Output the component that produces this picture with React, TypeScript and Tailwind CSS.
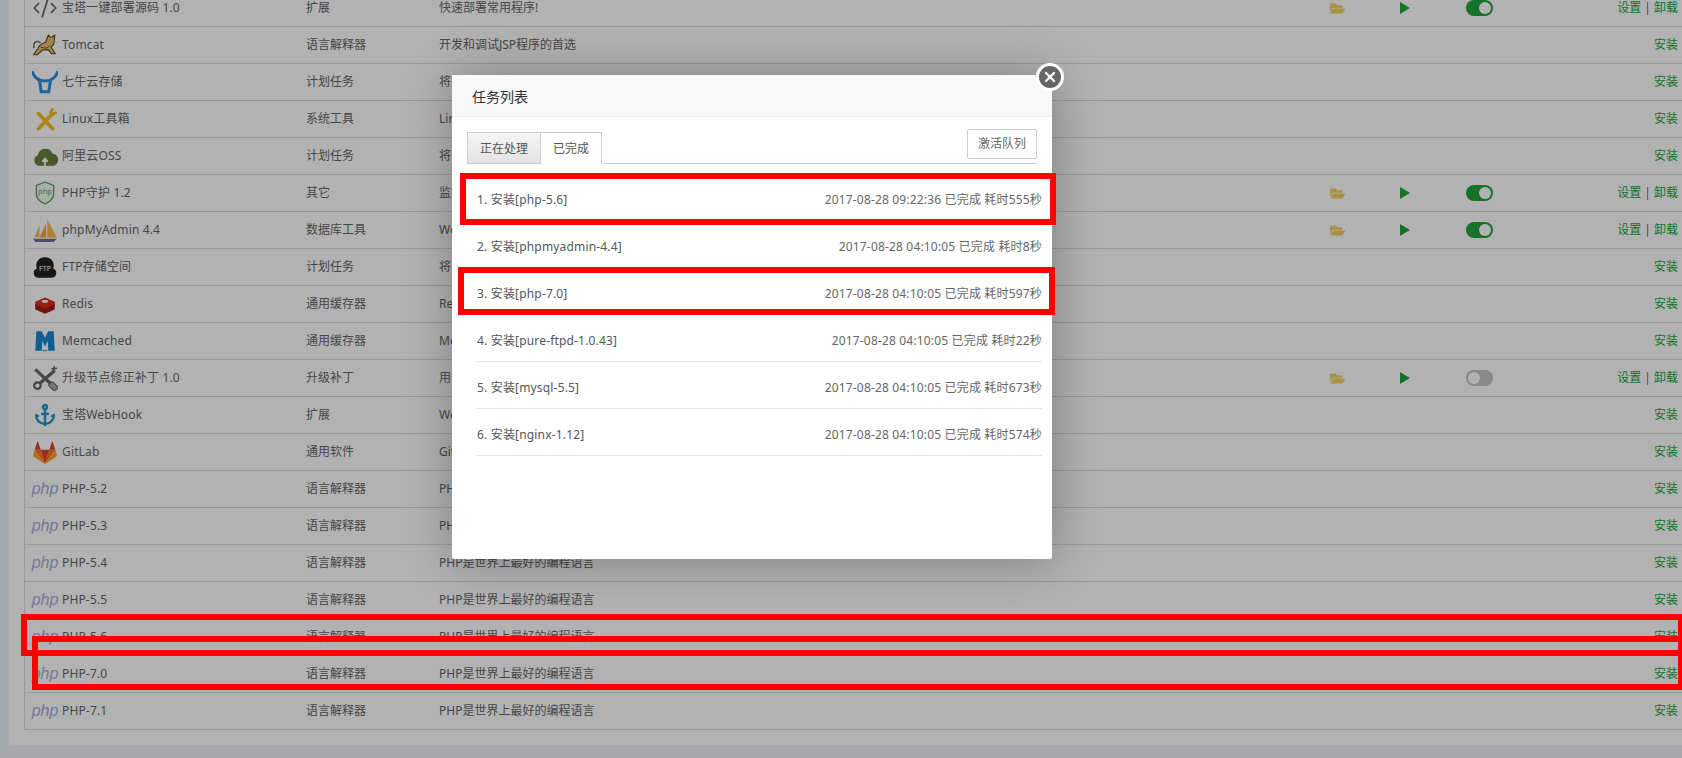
import React from "react";
import { Anchor, CodeXml, X } from "lucide-react";
import { FaFolderOpen } from "react-icons/fa";

type Plugin = {
  name: string;
  type: string;
  desc: string;
  icon: React.ReactNode;
  // Only installed plugins carry a switch
  enabled?: boolean;
};

const svgProps = { width: 26, height: 26, viewBox: "0 0 24 24" };

const TomcatIcon = () => (
  <svg {...svgProps}>
    <path d="M8 10C3 7 1 10 2 15" fill="none" stroke="#6b6b6b" strokeWidth="1.4" />
    <path
      d="M15 3l2.5 2L21 3l-.5 6c0 3-2 4-3 5l4 6h-3.5l-3-3.500H10L5 21H1.500l4-6c1-3 4-4.500 7-5.500z"
      fill="#e0c070"
      stroke="#5c4a1c"
      strokeWidth="1"
    />
    <path d="M8 14l5 1 3-2" fill="none" stroke="#5c4a1c" strokeWidth="0.8" />
  </svg>
);

const QiniuIcon = () => (
  <svg {...svgProps}>
    <path d="M0 2c2 6 6 9 12 9s10-3 12-9" fill="none" stroke="#2f8fe0" strokeWidth="2.800" />
    <path d="M7 11l1.500 10h7L17 11" fill="none" stroke="#2f8fe0" strokeWidth="2.800" />
  </svg>
);

const LinuxToolsIcon = () => (
  <svg {...svgProps}>
    <path d="M6 21L19 7" stroke="#f5bd1f" strokeWidth="3.400" strokeLinecap="round" />
    <path d="M6 7l13 14" stroke="#f5bd1f" strokeWidth="3.400" strokeLinecap="round" />
    <path d="M19 8l3-2M17 6l2-3" stroke="#f5bd1f" strokeWidth="2.400" strokeLinecap="round" />
  </svg>
);

const AliyunIcon = () => (
  <svg {...svgProps}>
    <path
      d="M7 21a5 5 0 0 1-1.500-9.700A7 7 0 0 1 19 10a5.500 5.500 0 0 1-.500 11z"
      fill="#6b8040"
    />
    <path d="M12 21v-5M9.500 17.500L12 14.500l2.500 3" fill="none" stroke="#fff" strokeWidth="1.800" />
  </svg>
);

const ShieldIcon = () => (
  <svg {...svgProps}>
    <path
      d="M12 2l8 3v8c0 5-5 8-8 9-3-1-8-4-8-9V5z"
      fill="#f0faf0"
      stroke="#5f9f6a"
      strokeWidth="1.200"
    />
    <text x="12" y="13" textAnchor="middle" fontSize="7" fill="#5f9f6a">
      php
    </text>
  </svg>
);

const SailIcon = () => (
  <svg {...svgProps}>
    <path d="M14 2l9 17h-9z" fill="#f8bc50" />
    <path d="M13 6v13H7z" fill="#f0a840" />
    <path d="M7 8v11H2z" fill="#f4bc60" />
    <path d="M1 20h22l-3 3H3z" fill="#6a70a0" />
  </svg>
);

const FtpIcon = () => (
  <svg {...svgProps}>
    <path
      d="M6 22a4.500 4.500 0 0 1-1.500-8.700A7.500 7.500 0 0 1 12 3a7.500 7.500 0 0 1 7.500 10.300A4.500 4.500 0 0 1 18 22z"
      fill="#222"
    />
    <text x="12" y="15.500" textAnchor="middle" fontSize="6.500" fill="#fff">
      FTP
    </text>
  </svg>
);

const RedisIcon = () => (
  <svg {...svgProps}>
    <path d="M3 12l9-4 9 4v5l-9 4-9-4z" fill="#a41e11" />
    <path d="M3 10l9-4 9 4v3l-9 4-9-4z" fill="#d82c20" />
    <path d="M3 13l9 4 9-4" fill="none" stroke="#7a1208" strokeWidth="0.8" />
    <ellipse cx="12" cy="9.500" rx="3" ry="1.400" fill="#fff" />
  </svg>
);

const MemcachedIcon = () => (
  <svg {...svgProps}>
    <path d="M4 3h5l3 6 3-6h5l1 18h-6l-.5-9-2.500 5-2.500-5-.5 9H3z" fill="#1c86d0" />
    <path d="M10 20h1.500v1.500H10zM12.500 20H14v1.500h-1.500z" fill="#1c86d0" />
  </svg>
);

const PatchIcon = () => (
  <svg {...svgProps}>
    <path d="M3 4l15 14" stroke="#666" strokeWidth="3" />
    <rect x="-3" y="-2.500" width="8" height="5" rx="1" transform="translate(19 19) rotate(43)" fill="#aaa" stroke="#666" />
    <path d="M21 5L7 17" stroke="#666" strokeWidth="3" />
    <circle cx="5" cy="19" r="3" fill="none" stroke="#666" strokeWidth="2" />
    <path d="M23 3l-5 .5M20.500 1L20 6" stroke="#666" strokeWidth="1.600" />
  </svg>
);

const GitLabIcon = () => (
  <svg {...svgProps}>
    <path d="M12 23L8 10h8z" fill="#e24329" />
    <path d="M12 23L8 10H2.500z" fill="#fc6d26" />
    <path d="M2.500 10L1 15c0 .6.200 1 .600 1.300L12 23z" fill="#fca326" />
    <path d="M12 23l4-13h5.500z" fill="#fc6d26" />
    <path d="M21.500 10l1.500 5c0 .6-.200 1-.600 1.300L12 23z" fill="#fca326" />
    <path d="M2.500 10H8L5.600 2.500c-.100-.4-.600-.4-.700 0z" fill="#e24329" />
    <path d="M21.500 10H16l2.400-7.500c.100-.4.600-.4.700 0z" fill="#e24329" />
  </svg>
);

const PhpIcon = () => (
  <span className="text-[16px] italic leading-none text-[#a4aedb] [font-family:'Liberation_Sans',sans-serif]">
    php
  </span>
);

const PHP_DESC = "PHP是世界上最好的编程语言";
const phpRow = (version: string): Plugin => ({
  name: `PHP-${version}`,
  type: "语言解释器",
  desc: PHP_DESC,
  icon: <PhpIcon />,
});

const plugins: Plugin[] = [
  { name: "宝塔一键部署源码 1.0", type: "扩展", desc: "快速部署常用程序!", icon: <CodeXml size={26} strokeWidth={1.6} className="text-[#666]" />, enabled: true },
  { name: "Tomcat", type: "语言解释器", desc: "开发和调试JSP程序的首选", icon: <TomcatIcon /> },
  { name: "七牛云存储", type: "计划任务", desc: "将网站或数据库打包备份到七牛对象存储空间", icon: <QiniuIcon /> },
  { name: "Linux工具箱", type: "系统工具", desc: "Linux系统工具箱", icon: <LinuxToolsIcon /> },
  { name: "阿里云OSS", type: "计划任务", desc: "将网站或数据库打包备份到阿里云OSS", icon: <AliyunIcon /> },
  { name: "PHP守护 1.2", type: "其它", desc: "监控PHP-FPM运行状态", icon: <ShieldIcon />, enabled: true },
  { name: "phpMyAdmin 4.4", type: "数据库工具", desc: "Web端MySQL管理工具", icon: <SailIcon />, enabled: true },
  { name: "FTP存储空间", type: "计划任务", desc: "将网站或数据库打包备份到FTP存储空间", icon: <FtpIcon /> },
  { name: "Redis", type: "通用缓存器", desc: "Redis内存数据库", icon: <RedisIcon /> },
  { name: "Memcached", type: "通用缓存器", desc: "Memcached缓存器", icon: <MemcachedIcon /> },
  { name: "升级节点修正补丁 1.0", type: "升级补丁", desc: "用于修正升级节点", icon: <PatchIcon />, enabled: false },
  { name: "宝塔WebHook", type: "扩展", desc: "WebHook", icon: <Anchor size={24} strokeWidth={2.4} className="text-[#2c96cc]" /> },
  { name: "GitLab", type: "通用软件", desc: "GitLab代码托管", icon: <GitLabIcon /> },
  phpRow("5.2"),
  phpRow("5.3"),
  phpRow("5.4"),
  phpRow("5.5"),
  phpRow("5.6"),
  phpRow("7.0"),
  phpRow("7.1"),
];

const tasks = [
  { name: "安装[php-5.6]", time: "2017-08-28 09:22:36", cost: "555" },
  { name: "安装[phpmyadmin-4.4]", time: "2017-08-28 04:10:05", cost: "8" },
  { name: "安装[php-7.0]", time: "2017-08-28 04:10:05", cost: "597" },
  { name: "安装[pure-ftpd-1.0.43]", time: "2017-08-28 04:10:05", cost: "22" },
  { name: "安装[mysql-5.5]", time: "2017-08-28 04:10:05", cost: "673" },
  { name: "安装[nginx-1.12]", time: "2017-08-28 04:10:05", cost: "574" },
];

const Toggle: React.FC<{ on: boolean }> = ({ on }) => (
  <span
    className={`flex h-[16px] w-[27px] items-center rounded-full px-[2px] ${
      on ? "justify-end bg-[#20a53a]" : "justify-start bg-[#c4c4c4]"
    }`}
  >
    <span className="h-[12px] w-[12px] rounded-full bg-white" />
  </span>
);

const PluginRow: React.FC<{ plugin: Plugin }> = ({ plugin }) => {
  const installed = plugin.enabled !== undefined;
  return (
    <div className="grid h-[37px] grid-cols-[281px_133px_891px_70px_66px_1fr] items-center border-b border-[#dcdcdc]">
      <div className="flex items-center gap-[4px] pl-[7px]">
        <span className="flex h-[26px] w-[26px] items-center justify-center">{plugin.icon}</span>
        <span className="-mt-[1px] whitespace-nowrap tracking-[0.15px]">{plugin.name}</span>
      </div>
      <div>{plugin.type}</div>
      <div className="whitespace-nowrap">{plugin.desc}</div>
      {installed ? (
        <>
          <FaFolderOpen size={15} className="text-[#f0d060]" />
          <svg width="10" height="12" viewBox="0 0 10 12">
            <path d="M0 0l10 6-10 6z" fill="#20a53a" />
          </svg>
          <div className="flex items-center justify-between pr-[4px]">
            <Toggle on={!!plugin.enabled} />
            <span className="text-[#20a53a]">
              设置 <span className="text-[#666]">|</span> 卸载
            </span>
          </div>
        </>
      ) : (
        <div className="col-start-6 pr-[4px] text-right text-[#20a53a]">安装</div>
      )}
    </div>
  );
};

const TaskModal: React.FC = () => (
  <div className="absolute left-[452px] top-[75px] h-[484px] w-[600px] rounded-[2px] bg-white shadow-[1px_1px_50px_rgba(0,0,0,0.3)]">
    <button className="absolute -right-3 -top-3 flex h-7 w-7 items-center justify-center rounded-full border-[3px] border-white bg-[#666]">
      <X size={16} strokeWidth={3.5} className="text-white" />
    </button>
    <div className="flex h-[42px] items-center border-b border-[#eee] bg-[#f8f8f8] pl-[20px] pt-[1px] text-[14px] text-[#333]">
      任务列表
    </div>
    <div className="mx-[15px] mt-[15px] flex h-[32px] justify-between border-b border-[#ccc]">
      <div className="flex">
        <div className="flex h-[32px] w-[74px] items-center justify-center border border-[#ccc] bg-gradient-to-b from-[#f6f6f6] to-[#e2e2e2] pt-[1px] text-[#555]">
          正在处理
        </div>
        <div className="flex h-[32px] w-[61px] items-center justify-center border border-l-0 border-[#ccc] border-b-white bg-white pt-[1px] text-[#555]">
          已完成
        </div>
      </div>
      <button className="-mt-[3px] h-[30px] w-[70px] rounded-[2px] border border-[#ccc] bg-white text-[#666]">
        激活队列
      </button>
    </div>
    <ul className="ml-[25px] mt-[10px] w-[565px]">
      {tasks.map((task, index) => (
        <li
          key={task.name}
          className="flex justify-between border-b border-[#e5e5e5] pb-[9px] pt-[15px] leading-[22px] tracking-[0.17px]"
        >
          <span className="text-[#555]">
            {index + 1}. {task.name}
          </span>
          <span className="text-[#666]">
            {task.time} 已完成 耗时{task.cost}秒
          </span>
        </li>
      ))}
    </ul>
  </div>
);

const App: React.FC = () => (
  <div className="relative h-[758px] w-[1682px] overflow-hidden bg-[#f1f3f7] text-[12px] text-[#666] [font-family:'Noto_Sans','Noto_Sans_CJK_SC',sans-serif]">
    <div className="ml-[9px] h-[745px] overflow-hidden bg-white pl-[15px]">
      <div className="-mt-[10px] border-l border-[#dcdcdc]">
        {plugins.map((plugin) => (
          <PluginRow key={plugin.name} plugin={plugin} />
        ))}
      </div>
    </div>

    {/* Layer mask */}
    <div className="absolute inset-0 bg-black/30" />
    <TaskModal />

    {/* Red annotations drawn over the screenshot */}
    <div className="absolute left-[460px] top-[173px] h-[52px] w-[596px] border-[6px] border-[#fe0000]" />
    <div className="absolute left-[458px] top-[267px] h-[48px] w-[597px] border-[6px] border-[#fe0000]" />
    <div className="absolute left-[21px] top-[614px] h-[42px] w-[1663px] border-[6px] border-[#fe0000]" />
    <div className="absolute left-[32px] top-[636px] h-[54px] w-[1652px] border-[6px] border-[#fe0000]" />
  </div>
);

export default App;
